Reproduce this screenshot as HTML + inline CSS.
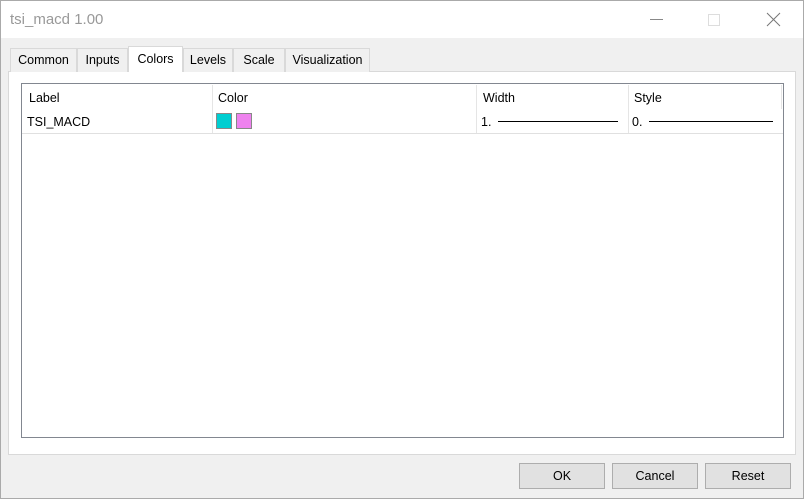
<!DOCTYPE html><html><head><style>
*{margin:0;padding:0;box-sizing:border-box}
body{width:804px;height:499px;background:#f0f0f0;font-family:"Liberation Sans",sans-serif;font-size:12px;color:#000;position:relative;overflow:hidden}
.win{position:absolute;left:0;top:0;width:804px;height:499px;border:1px solid #aaa}
.title{position:absolute;left:1px;top:1px;width:802px;height:37px;background:#fff}
.t{position:absolute;left:9px;top:10px;font-size:15px;color:#999}
.tab{position:absolute;top:48px;height:24px;border:1px solid #d9d9d9;border-bottom:none;background:#f0f0f0;text-align:center;line-height:23px;font-size:12.5px}
.panel{position:absolute;left:8px;top:71px;width:788px;height:384px;background:#fff;border:1px solid #d9d9d9}
.lv{position:absolute;left:21px;top:83px;width:763px;height:355px;border:1px solid #828790;background:#fff}
.a{position:absolute;font-size:12.5px}
.vs{position:absolute;top:1px;width:1px;height:24px;background:#e5e5e5}
.btn{position:absolute;top:463px;width:86px;height:26px;border:1px solid #adadad;background:#e1e1e1;text-align:center;line-height:24px;font-size:12.5px}
</style></head><body>
<div class="win"></div>
<div class="title"><div class="t">tsi_macd 1.00</div>
<div style="position:absolute;left:649px;top:18px;width:13px;height:1px;background:#888"></div>
<div style="position:absolute;left:707px;top:13px;width:12px;height:12px;border:1px solid #ddd"></div>
<svg style="position:absolute;left:765px;top:11px" width="15" height="15"><path d="M1 1L14 14M14 1L1 14" stroke="#777" stroke-width="1"/></svg>
</div>
<div class="panel"></div>
<div class="tab" style="left:10px;width:67px">Common</div>
<div class="tab" style="left:77px;width:51px">Inputs</div>
<div class="tab" style="left:128px;width:55px;top:46px;height:26px;background:#fff;line-height:24px">Colors</div>
<div class="tab" style="left:183px;width:50px">Levels</div>
<div class="tab" style="left:233px;width:52px">Scale</div>
<div class="tab" style="left:285px;width:85px">Visualization</div>
<div class="lv">
<div class="vs" style="left:190px"></div><div class="vs" style="left:454px"></div><div class="vs" style="left:606px"></div><div class="vs" style="left:759px"></div>
<div style="position:absolute;left:190px;top:25px;width:1px;height:24px;background:#e5e5e5"></div>
<div style="position:absolute;left:454px;top:25px;width:1px;height:24px;background:#e5e5e5"></div>
<div style="position:absolute;left:606px;top:25px;width:1px;height:24px;background:#e5e5e5"></div>
<div style="position:absolute;left:0;top:49px;width:761px;height:1px;background:#e0e0e0"></div>
<div class="a" style="left:7px;top:7px">Label</div>
<div class="a" style="left:196px;top:7px">Color</div>
<div class="a" style="left:461px;top:7px">Width</div>
<div class="a" style="left:612px;top:7px">Style</div>
<div class="a" style="left:5px;top:31px">TSI_MACD</div>
<div style="position:absolute;left:194px;top:29px;width:16px;height:16px;background:#00ced1;border:1px solid #888"></div>
<div style="position:absolute;left:214px;top:29px;width:16px;height:16px;background:#ee82ee;border:1px solid #888"></div>
<div class="a" style="left:459px;top:31px">1.</div>
<div style="position:absolute;left:476px;top:37px;width:120px;height:1px;background:#000"></div>
<div class="a" style="left:610px;top:31px">0.</div>
<div style="position:absolute;left:627px;top:37px;width:124px;height:1px;background:#000"></div>
</div>
<div class="btn" style="left:519px">OK</div>
<div class="btn" style="left:612px">Cancel</div>
<div class="btn" style="left:705px">Reset</div>
</body></html>
